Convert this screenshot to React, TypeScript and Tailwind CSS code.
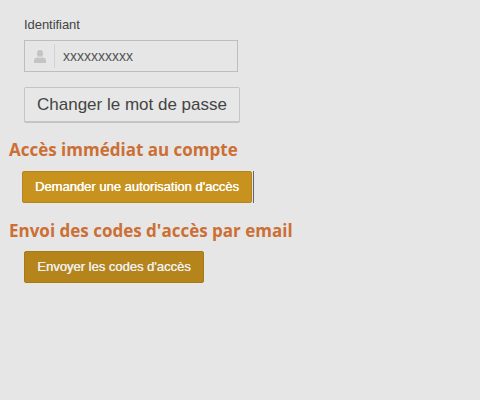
export default function App() {
  return (
    <div className="w-[480px] h-[400px] overflow-hidden bg-[#e6e6e6] font-['Liberation_Sans',Arial,sans-serif]">
      <div className="pl-6 pt-[17px]">
        <div className="text-[13px] tracking-[-0.05px] leading-[16px] text-[#444]">Identifiant</div>
        <div className="mt-[7px] w-[214px] h-[32px] border border-[#bdbdbd] bg-[#e6e6e6] flex items-center">
          <div className="w-[30px] h-[24px] border-r border-[#d2d2d2] flex items-center justify-center">
            <svg width="12" height="13" viewBox="0 0 12 13" fill="#c4c4c4">
              <ellipse cx="6" cy="3.4" rx="3" ry="3.4" />
              <path d="M0 13v-2.5C0 8.600 2 7.600 3.600 7.200 4.300 7.800 5 8 6 8s1.700-.2 2.400-.8C10 7.600 12 8.600 12 10.500V13z" />
            </svg>
          </div>
          <div className="pl-2 text-[14px] text-[#555]">xxxxxxxxxx</div>
        </div>
        <button className="mt-[15px] block w-[216px] h-[36px] border border-[#c4c4c4] border-b-2 rounded-[2px] bg-[#e7e7e7] text-[#444] text-[17px] text-center">
          Changer le mot de passe
        </button>
      </div>
      <h2 className="mt-[15px] pl-[9px] font-['Open_Sans',sans-serif] font-bold text-[#cc6f35] text-[17px] leading-[24px]">
        Accès immédiat au compte
      </h2>
      <div className="mt-[9px] ml-[22px] flex items-stretch">
        <button className="w-[230px] h-[32px] rounded-[2px] bg-[#c8921f] border border-[#b5841c] text-white text-[13px] text-center [text-shadow:0.3px_0_0_#fff]">
          Demander une autorisation d'accès
        </button>
        <div className="ml-px w-px bg-[#666]" />
      </div>
      <h2 className="mt-[16px] pl-[9px] font-['Open_Sans',sans-serif] font-bold text-[#cc6f35] text-[17px] leading-[24px]">
        Envoi des codes d'accès par email
      </h2>
      <button className="mt-[8px] ml-6 block w-[180px] h-[32px] rounded-[2px] bg-[#b5851c] border border-[#a67a18] text-[#eee] text-[13px] text-center [text-shadow:0.3px_0_0_#eee]">
        Envoyer les codes d'accès
      </button>
    </div>
  );
}
